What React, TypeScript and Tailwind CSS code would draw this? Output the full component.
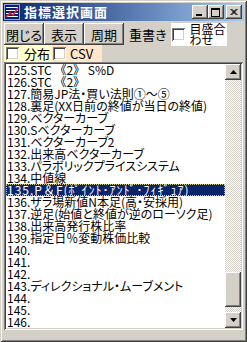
const indicators = [
  "125.STC 《2》 S%D",
  "126.STC 《2》",
  "127.簡易JP法・買い法則①～⑤",
  "128.裏足(XX日前の終値が当日の終値)",
  "129.ベクターカーブ",
  "130.Sベクターカーブ",
  "131.ベクターカーブ2",
  "132.出来高ベクターカーブ",
  "133.パラボリックプライスシステム",
  "134.中値線",
  "135.P＆F(ﾎﾟｲﾝﾄ･ｱﾝﾄﾞ･ﾌｨｷﾞｭｱ)",
  "136.ザラ場新値N本足(高・安採用)",
  "137.逆足(始値と終値が逆のローソク足)",
  "138.出来高発行株比率",
  "139.指定日％変動株価比較",
  "140.",
  "141.",
  "142.",
  "143.ディレクショナル・ムーブメント",
  "144.",
  "145.",
  "146.",
];

const selected = 10;

const rowFont = (s: string) => {
  if (s.includes("ﾎ")) return "[font-feature-settings:normal] tracking-[1px]";
  if (s.includes("《")) return "[font-feature-settings:normal]";
  return "";
};

const raised =
  "bg-[#d4d0c8] shadow-[inset_-1px_-1px_#404040,inset_1px_1px_#ffffff,inset_-2px_-2px_#808080,inset_2px_2px_#d4d0c8]";

const Checkbox = () => (
  <span className="w-[13px] h-[13px] shrink-0 bg-white shadow-[inset_1px_1px_#808080,inset_-1px_-1px_#ffffff,inset_2px_2px_#404040,inset_-2px_-2px_#d4d0c8]" />
);

const AppIcon = () => (
  <svg width="16" height="16" viewBox="0 0 16 16" className="shrink-0">
    <rect x="0" y="0" width="16" height="16" fill="#0a1f6e" />
    <rect x="0.5" y="0.5" width="15" height="15" fill="none" stroke="#8fa4d8" />
    <rect x="2" y="3" width="12" height="1" fill="#ffffff" />
    <rect x="2" y="6" width="12" height="1" fill="#ffffff" />
    <rect x="2" y="9" width="12" height="1" fill="#ffffff" />
    <rect x="2" y="12" width="12" height="1" fill="#ffffff" />
    <polyline points="2,13 6,9 9,11 14,4" fill="none" stroke="#ff2020" strokeWidth="1.5" />
  </svg>
);

const CaptionButton = ({ kind }: { kind: "min" | "max" | "close" }) => (
  <span className={`w-[16px] h-[14px] flex items-center justify-center ${raised}`}>
    <svg width="10" height="9" viewBox="0 0 10 9">
      {kind === "min" && <rect x="1" y="6" width="6" height="2" fill="#000" />}
      {kind === "max" && (
        <>
          <rect x="0.5" y="0.5" width="8" height="8" fill="none" stroke="#000" />
          <rect x="0" y="0" width="9" height="2" fill="#000" />
        </>
      )}
      {kind === "close" && (
        <path d="M1.5 1 L7.5 7 M7.5 1 L1.5 7 M2.5 1 L8.5 7 M8.5 1 L2.5 7" stroke="#000" strokeWidth="1" fill="none" />
      )}
    </svg>
  </span>
);

const ArrowButton = ({ up }: { up?: boolean }) => (
  <span className={`w-[16px] h-[16px] shrink-0 flex items-center justify-center ${raised}`}>
    <svg width="7" height="4" viewBox="0 0 7 4">
      {up ? <polygon points="3.5,0 7,4 0,4" fill="#000" /> : <polygon points="0,0 7,0 3.5,4" fill="#000" />}
    </svg>
  </span>
);

export default function App() {
  return (
    <div className="w-[247px] h-[342px] bg-[#d4d0c8] p-[3px] flex flex-col font-['Noto_Sans_CJK_JP','Noto_Sans_CJK_SC',sans-serif] [font-feature-settings:'palt'] text-black shadow-[inset_1px_1px_#d4d0c8,inset_-1px_-1px_#404040,inset_2px_2px_#ffffff,inset_-2px_-2px_#808080]">
      {/* title bar */}
      <div className="h-[18px] shrink-0 flex items-center pl-[1px] pr-[2px] bg-gradient-to-r from-[#0a246a] to-[#a6caf0]">
        <AppIcon />
        <span className="ml-[4px] text-white font-bold text-[13px] leading-[18px] tracking-[1px]">指標選択画面</span>
        <div className="ml-auto flex items-center">
          <CaptionButton kind="min" />
          <CaptionButton kind="max" />
          <span className="w-[2px]" />
          <CaptionButton kind="close" />
        </div>
      </div>

      {/* toolbar */}
      <div className="mt-[2px] h-[22px] shrink-0 flex items-center pl-[1px] text-[13px]">
        {["閉じる", "表示", "周期"].map((label) => (
          <button
            key={label}
            className={`w-[40px] h-[22px] flex items-center justify-center leading-none ${raised}`}
          >
            {label}
          </button>
        ))}
        <span className="ml-[2px]">
          <Checkbox />
        </span>
        <span className="ml-[3px] leading-none">重書き</span>
        <div className="ml-[5px] w-[56px] h-[23px] bg-white flex items-center pl-[1px]">
          <Checkbox />
          <span className="ml-[4px] text-[12px] leading-[11px]">
            目盛合
            <br />
            わせ
          </span>
        </div>
      </div>

      {/* filters */}
      <div className="h-[17px] shrink-0 flex pl-[1px] text-[13px]">
        <div className="w-[48px] bg-[#ffffcc] flex items-center pl-[2px]">
          <Checkbox />
          <span className="ml-[5px] leading-none">分布</span>
        </div>
        <div className="w-[50px] bg-[#ffe6c8] flex items-center pl-[1px]">
          <Checkbox />
          <span className="ml-[4px] leading-none">CSV</span>
        </div>
      </div>

      {/* list */}
      <div className="mx-[1px] h-[268px] shrink-0 flex p-[2px] bg-white shadow-[inset_1px_1px_#808080,inset_-1px_-1px_#ffffff,inset_2px_2px_#404040,inset_-2px_-2px_#d4d0c8]">
        <ul className="flex-1 flex flex-col text-[12px] leading-[12px]">
          {indicators.map((item, i) => (
            <li
              key={item}
              className={`h-[12px] pl-[1px] whitespace-nowrap ${rowFont(item)} ${
                i === selected
                  ? "bg-[#0a246a] text-white outline-1 outline-dotted -outline-offset-1 outline-[#c8c890]"
                  : ""
              }`}
            >
              {item}
            </li>
          ))}
        </ul>
        <div className="w-[16px] flex flex-col bg-[image:repeating-conic-gradient(#d4d0c8_0_25%,#ffffff_0_50%)] bg-[length:2px_2px]">
          <ArrowButton up />
          <span className={`mt-auto mb-[5px] h-[35px] ${raised}`} />
          <ArrowButton />
        </div>
      </div>
    </div>
  );
}
